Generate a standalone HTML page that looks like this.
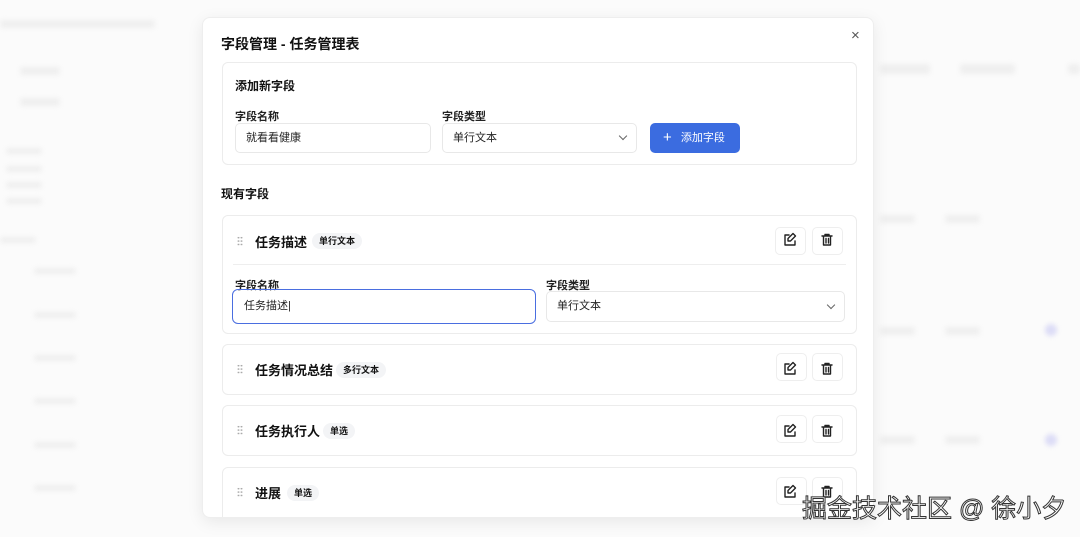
<!DOCTYPE html>
<html><head><meta charset="utf-8"><style>
*{box-sizing:border-box;margin:0;padding:0}
body{width:1080px;height:537px;overflow:hidden;background:#fbfbfb;font-family:"Liberation Sans","Noto Sans CJK SC",sans-serif;color:#111;position:relative}
.b{position:absolute;background:#efefef;border-radius:3px;filter:blur(2.5px)}
.modal{position:absolute;left:202px;top:17px;width:672px;height:501px;background:#fff;border-radius:8px;box-shadow:0 4px 16px rgba(0,0,0,.08);border:1px solid #eee;overflow:hidden}
.a{position:absolute}
.card{position:absolute;left:19px;width:635px;border:1px solid #ececec;border-radius:6px;background:#fff}
.lbl{position:absolute;font-size:11px;font-weight:bold;color:#222}
.inp{position:absolute;height:30px;border:1px solid #e8e8e8;border-radius:5px;font-size:11px;line-height:28px;padding-left:10px;color:#222}
.chev{position:absolute;right:10px;top:9px;width:6px;height:6px;border-right:1px solid #666;border-bottom:1px solid #666;transform:rotate(45deg)}
.row{position:absolute;left:0;right:0;height:28px;display:flex;align-items:center}
.grip{position:absolute;left:14px;width:6px;height:10px;background-image:radial-gradient(circle,#aaa 0.8px,transparent 1px);background-size:3px 3.4px}
.name{position:absolute;left:32px;font-size:13px;font-weight:bold}
.tag{position:absolute;font-size:9px;font-weight:bold;background:#f3f4f6;border-radius:8px;padding:2px 7px;line-height:12px}
.btn{position:absolute;width:31px;height:28px;border:1px solid #eee;border-radius:5px}
</style></head><body>
<div class="b" style="left:0;top:20px;width:155px;height:8px"></div>
<div class="b" style="left:20px;top:67px;width:40px;height:8px"></div>
<div class="b" style="left:20px;top:98px;width:40px;height:8px"></div>
<div class="b" style="left:6px;top:148px;width:36px;height:6px"></div>
<div class="b" style="left:6px;top:166px;width:36px;height:6px"></div>
<div class="b" style="left:6px;top:182px;width:36px;height:6px"></div>
<div class="b" style="left:6px;top:198px;width:36px;height:6px"></div>
<div class="b" style="left:0;top:237px;width:36px;height:6px"></div>
<div class="b" style="left:34px;top:268px;width:42px;height:6px"></div>
<div class="b" style="left:34px;top:312px;width:42px;height:6px"></div>
<div class="b" style="left:34px;top:355px;width:42px;height:6px"></div>
<div class="b" style="left:34px;top:398px;width:42px;height:6px"></div>
<div class="b" style="left:34px;top:442px;width:42px;height:6px"></div>
<div class="b" style="left:34px;top:485px;width:42px;height:6px"></div>
<div class="b" style="left:880px;top:64px;width:50px;height:10px"></div>
<div class="b" style="left:960px;top:64px;width:55px;height:10px"></div>
<div class="b" style="left:1068px;top:64px;width:12px;height:10px"></div>
<div class="b" style="left:880px;top:215px;width:35px;height:8px"></div>
<div class="b" style="left:945px;top:215px;width:35px;height:8px"></div>
<div class="b" style="left:880px;top:327px;width:35px;height:8px"></div>
<div class="b" style="left:945px;top:327px;width:35px;height:8px"></div>
<div class="b" style="left:1045px;top:324px;width:12px;height:12px;background:#dcdcf6;border-radius:6px"></div>
<div class="b" style="left:1045px;top:434px;width:12px;height:12px;background:#dcdcf6;border-radius:6px"></div>
<div class="b" style="left:880px;top:436px;width:35px;height:8px"></div>
<div class="b" style="left:945px;top:436px;width:35px;height:8px"></div>

<div class="modal">
 <div class="a" style="left:18px;top:16px;font-size:14px;font-weight:bold">字段管理 - 任务管理表</div>
 <div class="a" style="left:648px;top:9px;font-size:15px;color:#555">×</div>
 <div class="card" style="top:44px;height:103px">
  <div class="a" style="left:12px;top:14px;font-size:12px;font-weight:bold">添加新字段</div>
  <div class="lbl" style="left:12px;top:45px">字段名称</div>
  <div class="lbl" style="left:219px;top:45px">字段类型</div>
  <div class="inp" style="left:12px;top:60px;width:196px">就看看健康</div>
  <div class="inp" style="left:219px;top:60px;width:195px">单行文本<span class="chev"></span></div>
  <div class="a" style="left:427px;top:60px;width:90px;height:30px;background:#3b6ce0;border-radius:5px;color:#fff;font-size:11px;line-height:30px;padding-left:13px"><span style="font-size:15px;vertical-align:-1px">+</span>&nbsp;&nbsp;&nbsp;添加字段</div>
 </div>
 <div class="a" style="left:18px;top:167px;font-size:12px;font-weight:bold">现有字段</div>
 <div class="card" style="top:197px;height:119px">
  <div class="row" style="top:11px"><span class="grip" style="top:9px"></span><span class="name">任务描述</span><span class="tag" style="left:89px;top:6px">单行文本</span>
   <div class="btn" style="left:552px;top:0"></div><div class="btn" style="left:589px;top:0"></div></div>
  <div class="a" style="left:10px;right:10px;top:48px;height:1px;background:#eee"></div>
  <div class="lbl" style="left:12px;top:61px">字段名称</div>
  <div class="lbl" style="left:323px;top:61px">字段类型</div>
  <div class="inp" style="left:9px;top:73px;width:304px;height:35px;line-height:33px;border:1.5px solid #4a6ee0;border-radius:6px;padding-left:11px">任务描述|</div>
  <div class="inp" style="left:323px;top:75px;width:299px;height:31px">单行文本<span class="chev" style="top:10px"></span></div>
 </div>
 <div class="card" style="top:326px;height:51px">
  <div class="row" style="top:10px"><span class="grip" style="top:9px"></span><span class="name">任务情况总结</span><span class="tag" style="left:113px;top:7px">多行文本</span></div>
 </div>
 <div class="card" style="top:387px;height:51px">
  <div class="row" style="top:10px"><span class="grip" style="top:9px"></span><span class="name">任务执行人</span><span class="tag" style="left:100px;top:7px">单选</span></div>
 </div>
 <div class="card" style="top:449px;height:60px">
  <div class="row" style="top:10px"><span class="grip" style="top:9px"></span><span class="name">进展</span><span class="tag" style="left:64px;top:7px">单选</span></div>
 </div>
</div>
<svg width="1080" height="537" style="position:absolute;left:0;top:0" fill="none" stroke="#222" stroke-width="1.4" stroke-linecap="round" stroke-linejoin="round">
 <g id="e"><path d="M789 235h-4v10h10v-4"/><path d="M793 233.5l2.5 2.5-5 5h-2.5v-2.5z"/></g>
 <g id="d"><path d="M822 236h10M825 236v-1.5h4v1.5M823.5 236v9h7v-9M826 238.5v4.5M828.5 238.5v4.5"/></g>
 <use href="#e" y="129"/><use href="#d" y="129"/>
 <use href="#e" y="191"/><use href="#d" y="191"/>
 <use href="#e" y="252"/><use href="#d" y="252"/>
</svg>
<div style="position:absolute;left:776px;top:353px;width:31px;height:28px;border:1px solid #eee;border-radius:5px"></div>
<div style="position:absolute;left:812px;top:353px;width:31px;height:28px;border:1px solid #eee;border-radius:5px"></div>
<div style="position:absolute;left:776px;top:415px;width:31px;height:28px;border:1px solid #eee;border-radius:5px"></div>
<div style="position:absolute;left:812px;top:415px;width:31px;height:28px;border:1px solid #eee;border-radius:5px"></div>
<div style="position:absolute;left:776px;top:477px;width:31px;height:28px;border:1px solid #eee;border-radius:5px"></div>
<div style="position:absolute;left:812px;top:477px;width:31px;height:28px;border:1px solid #eee;border-radius:5px"></div>
<div style="position:absolute;left:802px;top:489px;font-size:25px;color:#fff;-webkit-text-stroke:1px #333;white-space:nowrap;letter-spacing:0px">掘金技术社区 @ 徐小夕</div>
</body></html>
